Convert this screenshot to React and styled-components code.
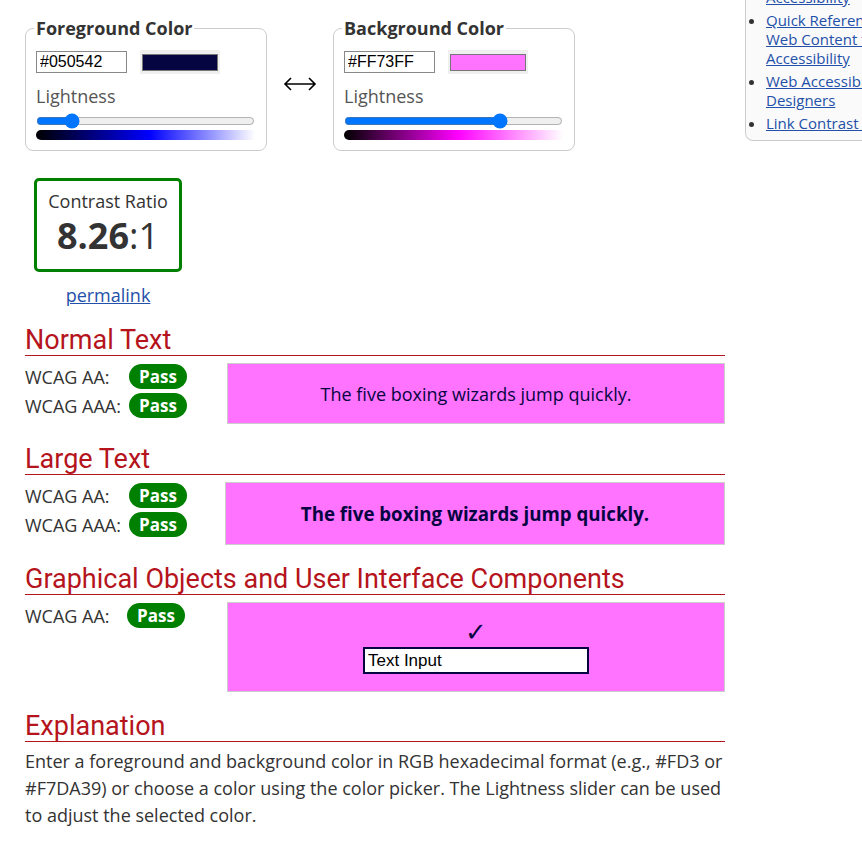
import React from "react";
import styled, { createGlobalStyle } from "styled-components";

const GlobalStyle = createGlobalStyle`
  body {
    margin: 0;
    overflow: hidden;
    background: #fff;
    font-family: "Open Sans", "Liberation Sans", sans-serif;
    color: #333;
  }
`;

const Page = styled.div`
  display: flex;
  align-items: flex-start;
  width: 1000px;
`;

const Main = styled.main`
  width: 700px;
  margin-left: 25px;
  padding-top: 17px;
`;

const Aside = styled.aside`
  margin-left: 20px;
  margin-top: -31px;
  border: 1px solid #ccc;
  border-top: none;
  border-radius: 0 0 0 8px;
  background: #fafafa;
  padding-bottom: 7px;
`;

const SideList = styled.ul`
  margin: 0;
  padding: 0 0 0 20px;
  width: 192px;
  font-size: 15px;
  line-height: 19px;
`;

const SideItem = styled.li`
  margin-bottom: 4px;
  &:last-child {
    margin-bottom: 0;
  }
`;

const Link = styled.a`
  color: #2350a8;
  text-decoration: underline;
`;

const PickerRow = styled.div`
  display: flex;
  align-items: center;
  gap: 16px;
`;

const Picker = styled.fieldset`
  margin: 0;
  width: 242px;
  box-sizing: border-box;
  border: 1px solid #ccc;
  border-radius: 8px;
  padding: 0 10px 10px 10px;
`;

const Legend = styled.legend`
  font-size: 18px;
  font-weight: 700;
  line-height: 23px;
  padding: 0 2px;
  margin-left: -2px;
  color: #333;
`;

const HexRow = styled.div`
  display: flex;
  align-items: center;
  margin-top: 10px;
`;

const HexInput = styled.input`
  width: 91px;
  height: 22px;
  box-sizing: border-box;
  border: 1px solid #888;
  padding: 0 3px;
  font-family: "Liberation Sans", Arial, sans-serif;
  font-size: 16px;
  color: #000;
`;

const Swatch = styled.div`
  margin-left: 13px;
  width: 80px;
  height: 24px;
  box-sizing: border-box;
  padding: 4px 2px 3px;
  background: #efefef;
`;

const SwatchColor = styled.div`
  height: 100%;
  box-sizing: border-box;
  border: 1px solid #777;
  background: ${(p) => p.$color};
`;

const Label = styled.div`
  margin-top: 11px;
  font-size: 18px;
  line-height: 23px;
  color: #555;
`;

const Slider = styled.input`
  display: block;
  width: 219px;
  height: 16px;
  margin: 5px 0 0;
`;

const Gradient = styled.div`
  margin-top: 1px;
  width: 219px;
  height: 10px;
  border-radius: 5px 0 0 5px;
  background: linear-gradient(to right, #000 0%, ${(p) => p.$hue} 52%, #fff 100%);
`;

const Swap = styled.svg`
  display: block;
  width: 34px;
  height: 14px;
`;

const RatioWrap = styled.div`
  width: 148px;
  margin: 27px 0 0 9px;
  display: flex;
  flex-direction: column;
  align-items: center;
`;

const RatioBox = styled.div`
  width: 100%;
  box-sizing: border-box;
  border: 3px solid #008000;
  border-radius: 5px;
  padding: 8px 0 10px;
  text-align: center;
`;

const RatioTitle = styled.div`
  font-size: 18px;
  line-height: 24px;
`;

const RatioValue = styled.div`
  font-size: 36px;
  line-height: 46px;
  b {
    font-weight: 700;
  }
`;

const Permalink = styled(Link)`
  margin-top: 11px;
  font-size: 18px;
  line-height: 24px;
`;

const Heading = styled.h2`
  margin: ${(p) => p.$top}px 0 0;
  font-family: Roboto, "Liberation Sans", sans-serif;
  font-weight: 400;
  font-size: 27px;
  line-height: 30px;
  color: #b5141c;
  border-bottom: 1px solid #b5141c;
`;

const Section = styled.div`
  display: flex;
  align-items: flex-start;
  margin-top: 7px;
`;

const Results = styled.div`
  display: flex;
  flex-direction: column;
  gap: 4px;
  margin-top: 1px;
`;

const Result = styled.div`
  display: flex;
  align-items: center;
  height: 25px;
`;

const ResultLabel = styled.span`
  width: ${(p) => p.$w}px;
  font-size: 18px;
  color: #333;
`;

const Badge = styled.span`
  width: 58px;
  height: 25px;
  border-radius: 13px;
  background: #008000;
  color: #fff;
  font-weight: 700;
  font-size: 17px;
  line-height: 25px;
  text-align: center;
`;

const Sample = styled.div`
  flex: 1;
  margin-left: ${(p) => p.$gap}px;
  height: ${(p) => p.$h}px;
  box-sizing: border-box;
  border: 1px solid #ccc;
  background: #ff73ff;
  color: #050542;
  display: flex;
  flex-direction: column;
  align-items: center;
  justify-content: center;
  font-size: ${(p) => (p.$large ? 18.7 : 18)}px;
  font-weight: ${(p) => (p.$large ? 700 : 400)};
`;

const Check = styled.div`
  font-family: "DejaVu Sans", sans-serif;
  font-size: 26px;
  line-height: 22px;
  color: #050542;
`;

const DemoInput = styled.div`
  margin-top: 4px;
  width: 226px;
  height: 27px;
  box-sizing: border-box;
  border: 2px solid #050542;
  background: #fff;
  padding: 0 3px;
  font-family: "Liberation Sans", Arial, sans-serif;
  font-size: 17px;
  line-height: 23px;
  color: #000;
`;

const Para = styled.p`
  margin: 6px 0 0;
  font-size: 18px;
  line-height: 27px;
  color: #333;
`;

function ColorPicker({ title, hex, color, hue, value }) {
  return (
    <Picker>
      <Legend>{title}</Legend>
      <HexRow>
        <HexInput defaultValue={hex} />
        <Swatch>
          <SwatchColor $color={color} />
        </Swatch>
      </HexRow>
      <Label>Lightness</Label>
      <Slider type="range" min="0" max="100" defaultValue={value} />
      <Gradient $hue={hue} />
    </Picker>
  );
}

function ResultList({ rows, labelW }) {
  return (
    <Results>
      {rows.map((r) => (
        <Result key={r}>
          <ResultLabel $w={labelW}>{r}</ResultLabel>
          <Badge>Pass</Badge>
        </Result>
      ))}
    </Results>
  );
}

export default function App() {
  return (
    <>
      <GlobalStyle />
      <Page>
        <Main>
          <PickerRow>
            <ColorPicker title="Foreground Color" hex="#050542" color="#050542" hue="#0000ff" value={14} />
            <Swap viewBox="0 0 34 14">
              <path d="M2 7 H32 M8 1 L2 7 L8 13 M26 1 L32 7 L26 13" fill="none" stroke="#000" strokeWidth="1.6" />
            </Swap>
            <ColorPicker title="Background Color" hex="#FF73FF" color="#ff73ff" hue="#ff00ff" value={73} />
          </PickerRow>

          <RatioWrap>
            <RatioBox>
              <RatioTitle>Contrast Ratio</RatioTitle>
              <RatioValue>
                <b>8.26</b>:1
              </RatioValue>
            </RatioBox>
            <Permalink href="#">permalink</Permalink>
          </RatioWrap>

          <Heading $top={18}>Normal Text</Heading>
          <Section>
            <ResultList rows={["WCAG AA:", "WCAG AAA:"]} labelW={104} />
            <Sample $gap={40} $h={61}>The five boxing wizards jump quickly.</Sample>
          </Section>

          <Heading $top={20}>Large Text</Heading>
          <Section>
            <ResultList rows={["WCAG AA:", "WCAG AAA:"]} labelW={104} />
            <Sample $gap={38} $h={63} $large>The five boxing wizards jump quickly.</Sample>
          </Section>

          <Heading $top={19}>Graphical Objects and User Interface Components</Heading>
          <Section>
            <ResultList rows={["WCAG AA:"]} labelW={102} />
            <Sample $gap={42} $h={90}>
              <Check>✓</Check>
              <DemoInput>Text Input</DemoInput>
            </Sample>
          </Section>

          <Heading $top={19}>Explanation</Heading>
          <Para>
            Enter a foreground and background color in RGB hexadecimal format (e.g., #FD3 or
            #F7DA39) or choose a color using the color picker. The Lightness slider can be used
            to adjust the selected color.
          </Para>
        </Main>

        <Aside>
          <SideList>
            <SideItem>
              <Link href="#">Contrast and Color Accessibility</Link>
            </SideItem>
            <SideItem>
              <Link href="#">Quick Reference: Testing Web Content for Accessibility</Link>
            </SideItem>
            <SideItem>
              <Link href="#">Web Accessibility for Designers</Link>
            </SideItem>
            <SideItem>
              <Link href="#">Link Contrast Checker</Link>
            </SideItem>
          </SideList>
        </Aside>
      </Page>
    </>
  );
}
